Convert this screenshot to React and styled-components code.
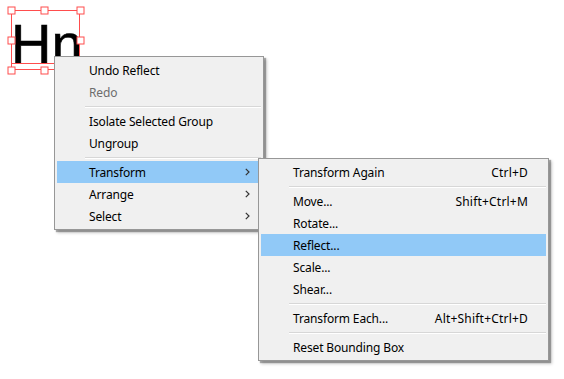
import React from 'react';
import styled, { createGlobalStyle } from 'styled-components';

const GlobalStyle = createGlobalStyle`
  html, body {
    margin: 0;
    padding: 0;
    background: #ffffff;
  }
  body {
    font-family: "Noto Sans", "Open Sans", sans-serif;
  }
`;

const Canvas = styled.div`
  position: relative;
  width: 564px;
  height: 379px;
  overflow: hidden;
  background: #ffffff;
`;

const Artwork = styled.div`
  position: absolute;
  left: 11px;
  top: 10px;
  width: 70px;
  height: 61px;
`;

const Glyph = styled.span`
  position: absolute;
  left: 0;
  top: 6px;
  font-family: "Liberation Sans", Arial, sans-serif;
  font-size: 56px;
  line-height: 1;
  color: #000000;
  -webkit-text-stroke: 0.6px #000000;
`;

const Selection = styled.svg`
  position: absolute;
  left: -4px;
  top: -4px;
  overflow: visible;
`;

const Menu = styled.div`
  position: absolute;
  left: ${(p) => p.$left}px;
  top: ${(p) => p.$top}px;
  width: ${(p) => p.$width}px;
  box-sizing: border-box;
  padding: 2px;
  background: #f0f0f0;
  border: 1px solid #979797;
  box-shadow: 2px 2px 1px rgba(0, 0, 0, 0.3), 3px 3px 3px rgba(0, 0, 0, 0.2);
  display: flex;
  flex-direction: column;
  font-family: "Noto Sans", "Open Sans", sans-serif;
  font-size: 12px;
  letter-spacing: -0.15px;
  color: #000000;
`;

const Item = styled.div`
  height: 22px;
  display: flex;
  align-items: center;
  padding: 0 18px 0 32px;
  background: ${(p) => (p.$active ? '#91c9f7' : 'transparent')};
  color: ${(p) => (p.$disabled ? '#6d6d6d' : '#000000')};
  white-space: nowrap;
`;

const Label = styled.span`
  flex: 1;
`;

const Shortcut = styled.span`
  margin-left: 24px;
  letter-spacing: 0.2px;
`;

const Arrow = styled.svg`
  margin-right: -7px;
  display: block;
`;

const Separator = styled.div`
  height: 7px;
  display: flex;
  align-items: center;
  padding-left: 28px;

  &::after {
    content: '';
    flex: 1;
    height: 1px;
    background: #d7d7d7;
    border-bottom: 1px solid #ffffff;
  }
`;

function Chevron() {
  return (
    <Arrow width="5" height="8" viewBox="0 0 5 8">
      <path d="M0.8 0.8 L4 4 L0.8 7.2" fill="none" stroke="#333" strokeWidth="1.2" />
    </Arrow>
  );
}

const handles = [
  [0, 0], [33, 0], [69, 0],
  [0, 30], [69, 30],
  [0, 60], [33, 60], [69, 60],
];

function SelectedText() {
  return (
    <Artwork>
      <Glyph>Hn</Glyph>
      <Selection width="80" height="70" viewBox="-4 -4 80 70">
        <rect x="0.5" y="0.5" width="68" height="59" fill="none" stroke="#ff4d4d" strokeWidth="1" />
        <line x1="0" y1="53.5" x2="69" y2="53.5" stroke="#ff4d4d" strokeWidth="1" />
        {handles.map(([x, y]) => (
          <rect
            key={`${x}-${y}`}
            x={x - 3}
            y={y - 3}
            width="7"
            height="7"
            fill="#ffffff"
            stroke="#ff4d4d"
            strokeWidth="1"
          />
        ))}
      </Selection>
    </Artwork>
  );
}

export default function App() {
  return (
    <Canvas>
      <GlobalStyle />
      <SelectedText />

      <Menu $left={54} $top={56} $width={210}>
        <Item>Undo Reflect</Item>
        <Item $disabled>Redo</Item>
        <Separator />
        <Item>Isolate Selected Group</Item>
        <Item>Ungroup</Item>
        <Separator />
        <Item $active>
          <Label>Transform</Label>
          <Chevron />
        </Item>
        <Item>
          <Label>Arrange</Label>
          <Chevron />
        </Item>
        <Item>
          <Label>Select</Label>
          <Chevron />
        </Item>
      </Menu>

      <Menu $left={258} $top={158} $width={291}>
        <Item>
          <Label>Transform Again</Label>
          <Shortcut>Ctrl+D</Shortcut>
        </Item>
        <Separator />
        <Item>
          <Label>Move...</Label>
          <Shortcut>Shift+Ctrl+M</Shortcut>
        </Item>
        <Item>Rotate...</Item>
        <Item $active>Reflect...</Item>
        <Item>Scale...</Item>
        <Item>Shear...</Item>
        <Separator />
        <Item>
          <Label>Transform Each...</Label>
          <Shortcut>Alt+Shift+Ctrl+D</Shortcut>
        </Item>
        <Separator />
        <Item>Reset Bounding Box</Item>
      </Menu>
    </Canvas>
  );
}
